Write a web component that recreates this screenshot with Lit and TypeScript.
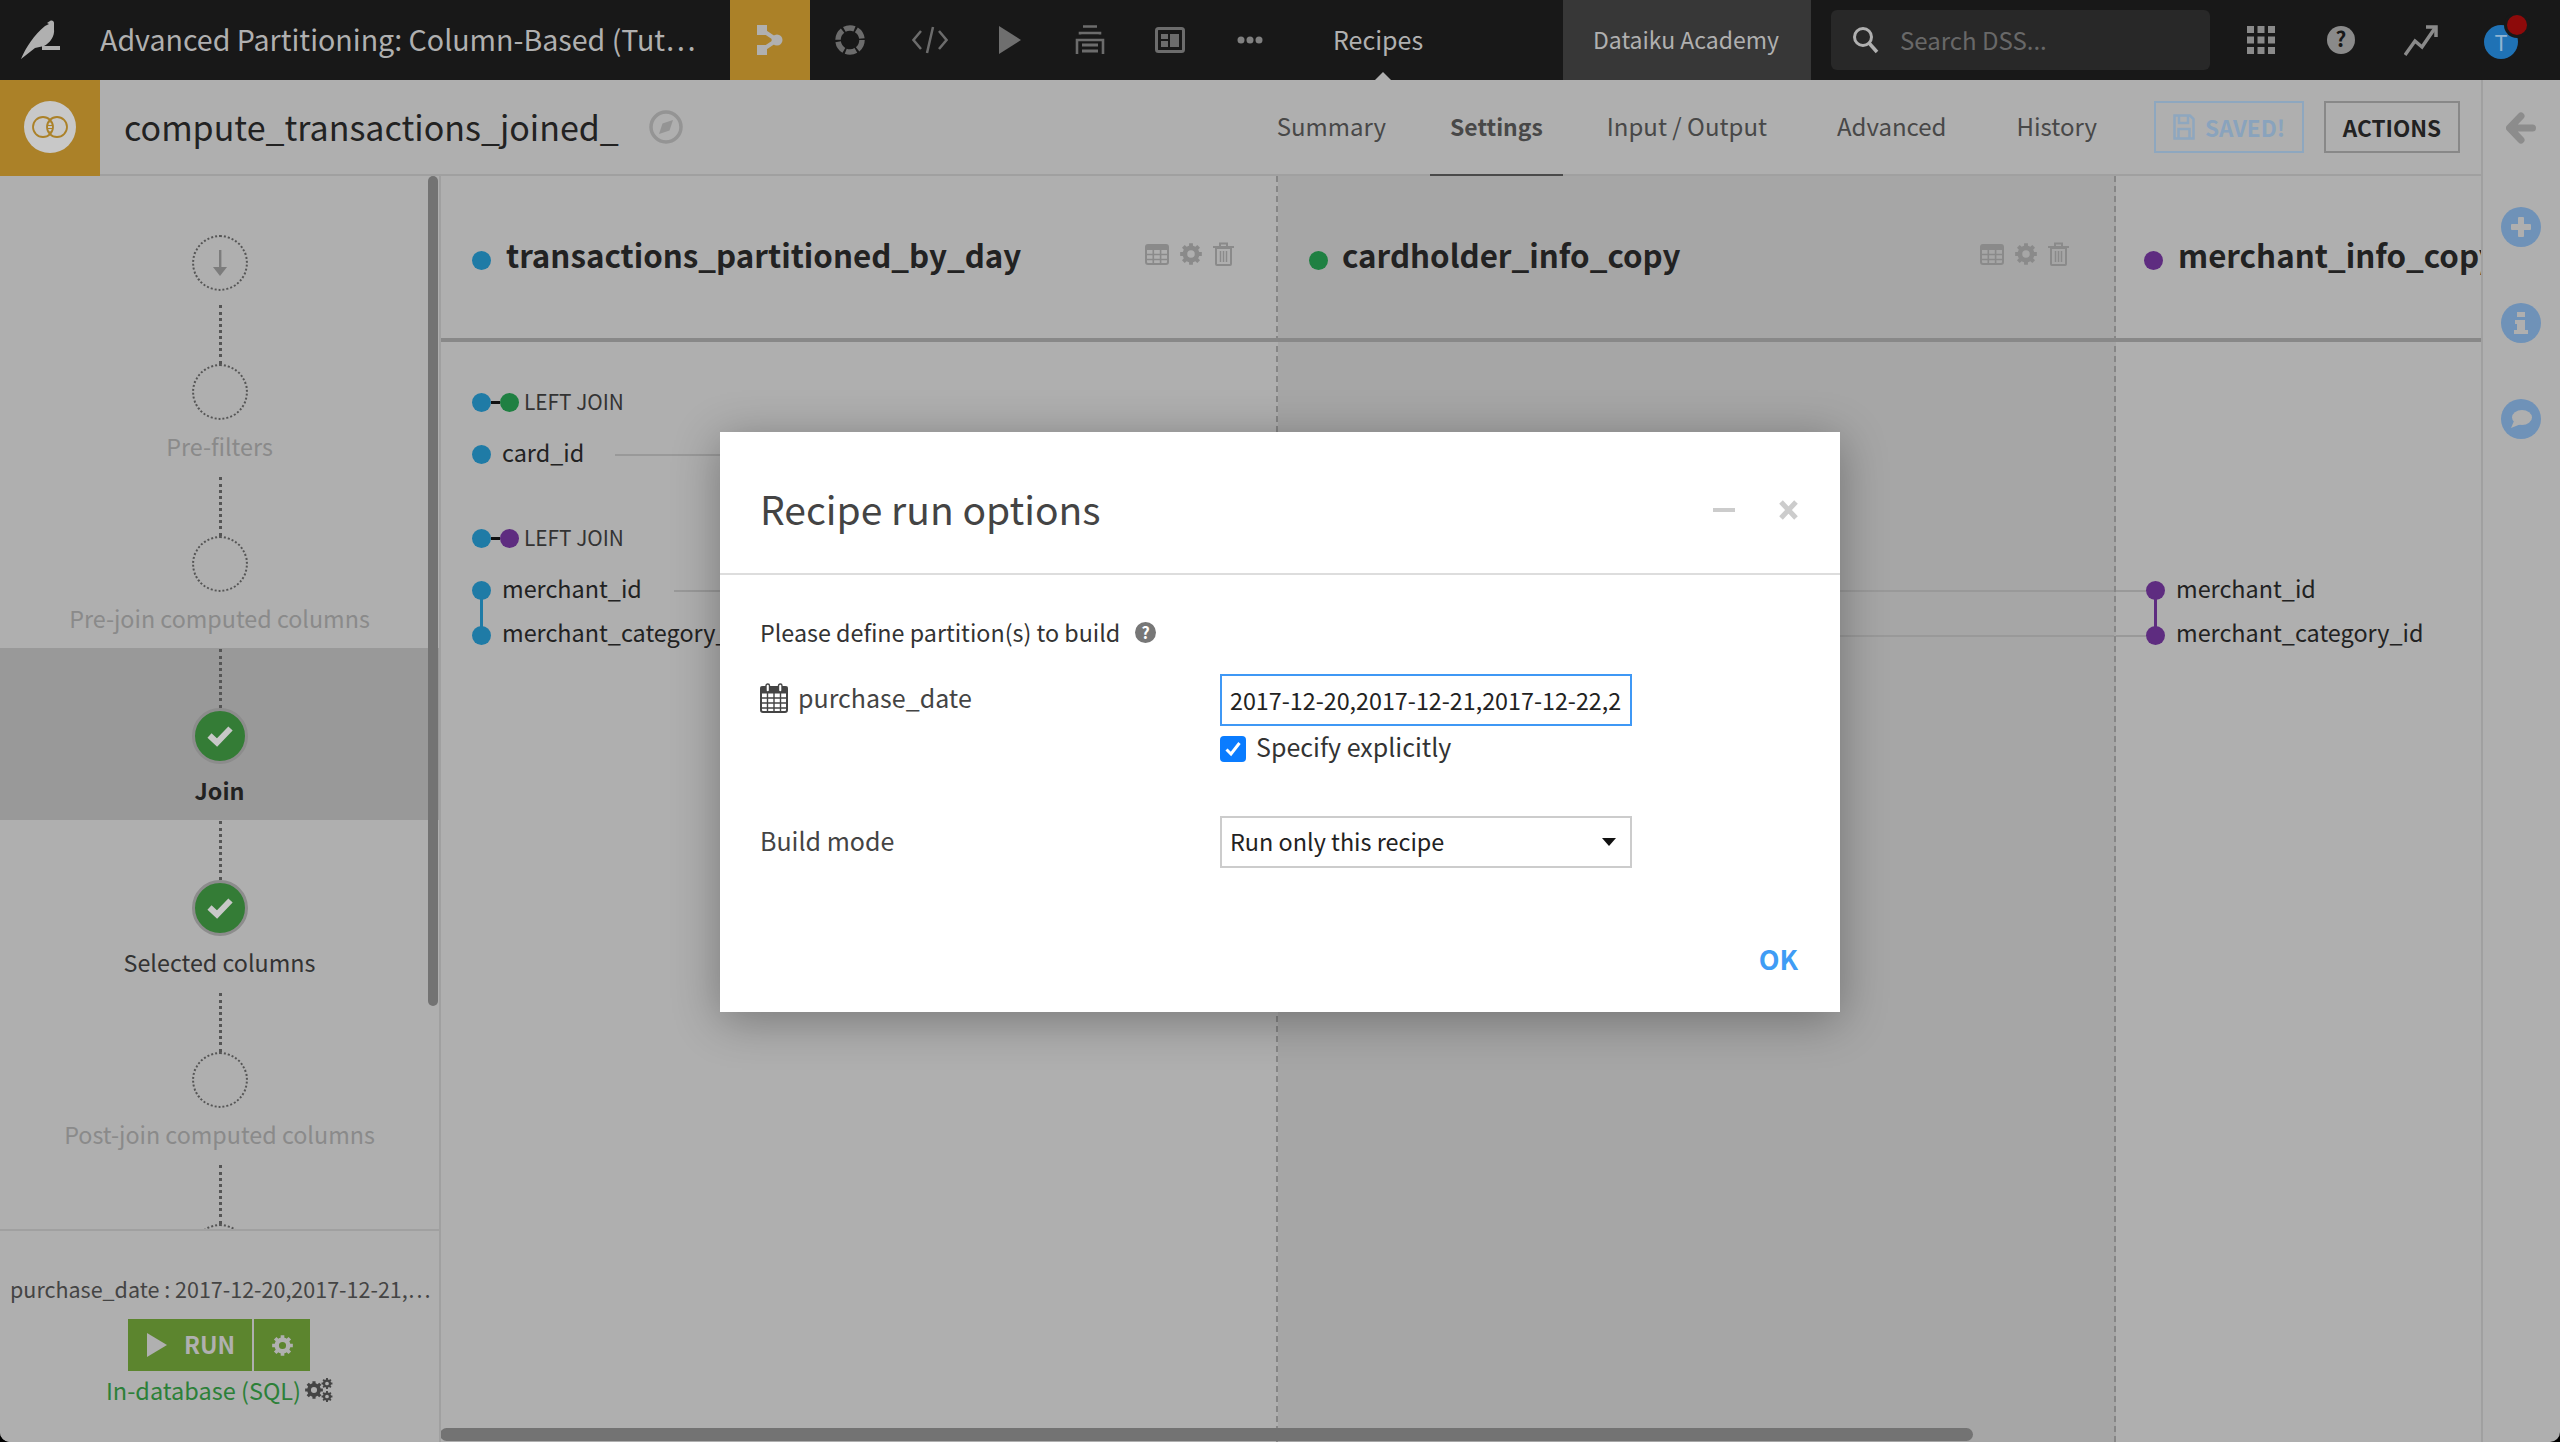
import { LitElement, html, css, svg } from "lit";
import { customElement } from "lit/decorators.js";

const gearPath = (cx: number, cy: number, r: number, teeth = 8) => {
  let d = "";
  const root = r * 0.76;
  const step = (Math.PI * 2) / teeth;
  for (let i = 0; i < teeth; i++) {
    const a = i * step - Math.PI / 2;
    const pts: [number, number][] = [
      [root, a - step * 0.5],
      [root, a - step * 0.3],
      [r, a - step * 0.22],
      [r, a + step * 0.22],
      [root, a + step * 0.3],
    ];
    for (const [rad, an] of pts) {
      d += `${d ? "L" : "M"}${(cx + rad * Math.cos(an)).toFixed(2)} ${(cy + rad * Math.sin(an)).toFixed(2)}`;
    }
  }
  const h = r * 0.34;
  d += `ZM${cx - h} ${cy}a${h} ${h} 0 1 0 ${h * 2} 0a${h} ${h} 0 1 0 ${-h * 2} 0Z`;
  return d;
};

const gearIcon = (size: number, color: string) => html`<svg width=${size} height=${size} viewBox="0 0 24 24" fill=${color}><path fill-rule="evenodd" d=${gearPath(12, 12, 12)}></path></svg>`;

const tableIcon = html`<svg class="ci t" viewBox="0 0 24 21"><rect x="1" y="1" width="22" height="19" rx="2" fill="none" stroke="#8a8a8a" stroke-width="2"></rect><rect x="1" y="1" width="22" height="5" fill="#8a8a8a"></rect><path d="M1 10.500H23M1 15.500H23M8.300 6V20M15.600 6V20" stroke="#8a8a8a" stroke-width="1.600"></path></svg>`;
const trashIcon = html`<svg class="ci b" viewBox="0 0 21 24"><path d="M3 6H18V22a1 1 0 0 1-1 1H4a1 1 0 0 1-1-1Z" fill="none" stroke="#8a8a8a" stroke-width="2"></path><path d="M0 5H21M7 5V1.500H14V5" fill="none" stroke="#8a8a8a" stroke-width="2"></path><path d="M7.500 9V20M10.500 9V20M13.500 9V20" stroke="#8a8a8a" stroke-width="1.500"></path></svg>`;

type Step = { label: string; state: "off" | "done"; active?: boolean; bold?: boolean };
const steps: Step[] = [
  { label: "Pre-filters", state: "off" },
  { label: "Pre-join computed columns", state: "off" },
  { label: "Join", state: "done", active: true, bold: true },
  { label: "Selected columns", state: "done" },
  { label: "Post-join computed columns", state: "off" },
  { label: "", state: "off" },
];

@customElement("app-root")
export class AppRoot extends LitElement {
  static styles = css`
    :host {
      display: block;
      width: 2560px;
      height: 1442px;
      position: relative;
      overflow: hidden;
      background: #000;
      font-family: "Noto Sans CJK SC", "Source Sans Pro", "Noto Sans", sans-serif;
      color: #333;
    }
    * { box-sizing: border-box; }
    .app { width: 2560px; height: 1442px; display: flex; flex-direction: column; background: #afafaf; border-radius: 0 0 10px 10px; overflow: hidden; }

    /* top bar */
    .top { height: 80px; flex: none; display: flex; align-items: stretch; background: #181818; color: #b0b0b0; }
    .logo { width: 100px; flex: none; display: flex; align-items: center; padding-left: 20px; }
    .pname { width: 630px; flex: none; font-size: 28.600px; line-height: 78px; white-space: nowrap; overflow: hidden; }
    .nav { width: 80px; flex: none; display: flex; align-items: center; justify-content: center; }
    .nav.on { background: #ab8128; }
    .recipes { width: 273px; flex: none; padding-left: 43px; font-size: 25px; line-height: 78px; position: relative; }
    .recipes::after { content: ""; position: absolute; left: 85px; bottom: 0; border: 8px solid transparent; border-top: 0; border-bottom-color: #afafaf; }
    .academy { width: 248px; flex: none; background: #373737; padding-left: 30px; font-size: 23px; line-height: 78px; white-space: nowrap; }
    .search { width: 379px; flex: none; margin: 10px 11px 10px 20px; background: #282828; border-radius: 6px; display: flex; align-items: center; gap: 21px; padding-left: 21px; font-size: 24px; color: #686868; }
    .search span { margin-top: -2px; }
    .avatar { width: 34px; height: 34px; border-radius: 50%; background: #1f72b5; position: relative; color: #8fb4d2; font-size: 22px; line-height: 32px; text-align: center; margin-top: 3px; }
    .avatar::after { content: ""; position: absolute; right: -9px; top: -10px; width: 20px; height: 20px; background: #8d0a0a; border-radius: 50%; box-shadow: 0 0 0 3px #181818; }
    .t-icon { width: 80px; flex: none; display: flex; align-items: center; justify-content: center; }

    /* layout */
    .below { flex: 1; min-height: 0; display: flex; }
    .center { flex: 1; min-width: 0; display: flex; flex-direction: column; }
    .rpanel { width: 79px; flex: none; border-left: 2px solid #a0a0a0; display: flex; flex-direction: column; align-items: center; padding-right: 2px; }
    .back { margin-top: 32px; height: 32px; }
    .rdot { width: 40px; height: 40px; border-radius: 50%; background: #6f92b8; display: flex; align-items: center; justify-content: center; }
    .rdot.first { margin-top: 63px; }
    .rdot + .rdot { margin-top: 56px; }

    /* sub bar */
    .sub { height: 96px; flex: none; display: flex; align-items: stretch; border-bottom: 2px solid #a0a0a0; }
    .badge { width: 100px; flex: none; background: #ab8128; display: flex; align-items: center; justify-content: center; padding-bottom: 2px; margin-bottom: -2px; }
    .badge span { width: 52px; height: 52px; border-radius: 50%; background: #c8c8c8; display: flex; align-items: center; justify-content: center; }
    .rname { margin-left: 24px; font-size: 34px; line-height: 94px; color: #222; white-space: nowrap; }
    .compass { margin-left: 30px; align-self: center; display: flex; }
    .tabs { margin-left: auto; display: flex; }
    .tab { padding: 0 20px; margin-left: 24px; font-size: 24px; line-height: 92px; color: #484848; position: relative; white-space: nowrap; }
    .tab:nth-child(n + 4) { margin-left: 30px; }
    .tab.on { font-weight: 700; font-size: 22.900px; }
    .tab.on::after { content: ""; position: absolute; left: 0; right: 0; bottom: -4px; height: 4px; background: #4a4a4a; }
    .actions { display: flex; gap: 20px; align-items: center; margin: 0 21px 0 37px; }
    .btn { height: 52px; display: flex; align-items: center; justify-content: center; gap: 10px; border: 2px solid; font-size: 22.500px; line-height: 46px; font-weight: 700; }
    .saved { width: 150px; border-color: #8ea7bf; color: #89a3bd; }
    .act { width: 136px; border-color: #888; color: #222; }

    /* workspace */
    .work { flex: 1; min-height: 0; display: flex; }
    .side { width: 441px; flex: none; border-right: 2px solid #a0a0a0; display: flex; flex-direction: column; position: relative; }
    .flow { flex: 1; min-height: 0; overflow: hidden; }
    .first-step { height: 128px; padding-top: 59px; display: flex; justify-content: center; }
    .step { height: 172px; display: flex; flex-direction: column; align-items: center; padding-top: 1px; }
    .step.on { background: #999; }
    .conn { height: 59px; width: 0; border-left: 3px dotted #555; flex: none; margin-left: 2px; }
    .node { width: 56px; height: 56px; flex: none; border-radius: 50%; border: 2px dotted #555; display: flex; align-items: center; justify-content: center; }
    .node.done { background: #347c36; border: 3px solid #8c8c8c; }
    .lbl { font-size: 23.300px; line-height: 32px; margin-top: 10px; color: #8a8a8a; white-space: nowrap; }
    .lbl.done { color: #333; }
    .lbl.bold { font-weight: 700; color: #222; }
    .thumb { position: absolute; left: 428px; top: 0; width: 10px; height: 830px; background: #737373; border-radius: 5px; }
    .foot { height: 213px; flex: none; border-top: 2px solid #a0a0a0; background: #afafaf; display: flex; flex-direction: column; align-items: center; padding-top: 42px; }
    .pline { width: 420px; font-size: 21.500px; line-height: 32px; color: #444; white-space: nowrap; margin-left: 1px; }
    .runrow { display: flex; gap: 2px; margin-top: 14px; margin-right: 1px; }
    .run { width: 124px; height: 52px; background: #5c852e; color: #b0b0b0; display: flex; align-items: center; padding-left: 19px; gap: 17px; font-size: 23.500px; font-weight: 700; }
    .run span { margin-top: -2px; }
    .rungear { width: 56px; height: 52px; background: #5c852e; display: flex; align-items: center; justify-content: center; }
    .engine { display: flex; align-items: center; gap: 4px; margin-top: 3px; color: #2c8038; font-size: 23.500px; line-height: 32px; }

    .main { flex: 1; min-width: 0; display: flex; overflow: hidden; position: relative; }
    .col { width: 837px; flex: none; border-right: 2px dashed #868686; display: flex; flex-direction: column; }
    .col.mid { background: #a6a6a6; width: 838px; }
    .col.last { flex: 1; min-width: 0; border-right: 0; overflow: hidden; }
    .chead { height: 166px; flex: none; border-bottom: 4px solid #888; margin-right: -2px; display: flex; align-items: flex-start; padding: 58px 0 0 31px; white-space: nowrap; }
    .col.last .chead { padding-left: 28px; }
    .chead .d { margin-top: 17px; flex: none; }
    .ctitle { font-size: 31.300px; font-weight: 700; line-height: 42px; color: #222; margin-left: 15px; }
    .mid .ctitle { margin-left: 14px; }
    .cicons { margin-left: auto; margin-right: 44px; display: flex; align-items: center; gap: 11px; height: 24px; margin-top: 8px; }
    .mid .cicons { margin-right: 47px; }
    .ci.t { width: 24px; height: 21px; }
    .ci.b { width: 21px; height: 24px; }
    .d { width: 19px; height: 19px; border-radius: 50%; display: block; }
    .blue { background: #1f7ba6; }
    .green { background: #1f8042; }
    .purple { background: #5e2c80; }
    .cbody { padding: 40px 0 0 31px; flex: 1; }
    .row { height: 40px; display: flex; align-items: center; font-size: 23.400px; color: #222; white-space: nowrap; position: relative; }
    .row .tx { margin: -5px 0 0 11px; }
    .row.g3 .tx { margin-top: -7px; }
    .jr { height: 40px; display: flex; align-items: center; font-size: 20.800px; color: #333; }
    .jr i { width: 9px; height: 3px; background: #111; display: block; }
    .jr .tx { margin: -2px 0 0 5px; }
    .g1 { margin-top: 12px; }
    .g2 { margin-top: 44px; }
    .g3 { margin-top: 5px; }
    .link { height: 2px; background: #999; margin-top: 2px; }
    .link.short { width: 200px; margin-left: 31px; flex: none; }
    .link.fill { flex: 1; margin-left: 32px; margin-right: -2px; }
    .link.to { width: 30px; flex: none; }
    .cbody.spaced { padding: 228px 0 0; }
    .cbody.spaced .row.full .link { flex: 1; }
    .d.tie { position: relative; }
    .tie::after { content: ""; position: absolute; left: 8px; top: 18px; width: 3px; height: 28px; background: inherit; }
    .hscroll { position: absolute; left: -1px; bottom: 1px; width: 1533px; height: 13px; background: #737373; border-radius: 7px; }

    /* dialog */
    .dialog { position: absolute; left: 720px; top: 432px; width: 1120px; height: 580px; background: #fff; box-shadow: 0 8px 44px rgba(0, 0, 0, 0.32); color: #444; }
    .dhead { height: 143px; border-bottom: 2px solid #ddd; display: flex; align-items: center; padding: 0 42px 0 40px; }
    .dtitle { font-size: 39px; line-height: 60px; color: #444; margin-top: 10px; }
    .dctl { margin-left: auto; display: flex; align-items: center; gap: 44px; margin-top: 14px; }
    .minus { width: 22px; height: 4px; background: #ccc; display: block; }
    .dbody { padding: 41px 0 0 40px; }
    .hint { display: flex; align-items: center; gap: 15px; font-size: 23.300px; line-height: 32px; color: #333; }
    .field { display: grid; grid-template-columns: 460px 412px; margin-top: 26px; }
    .flabel { display: flex; align-items: center; gap: 10px; font-size: 25px; color: #444; height: 46px; }
    .flabel svg { margin-top: 2px; }
    .input { display: block; width: 412px; height: 52px; border: 2px solid #3f98f5; padding: 0 8px; font: 23.300px/46px "Noto Sans CJK SC", sans-serif; color: #222; outline: none; background: #fff; }
    .check { display: flex; align-items: center; gap: 10px; margin-top: 10px; font-size: 25px; line-height: 26px; color: #333; }
    .check span:last-child { margin-top: -7px; }
    .box { width: 26px; height: 26px; border-radius: 4px; background: #0a7cff; display: flex; align-items: center; justify-content: center; }
    .field.b { margin-top: 54px; }
    .field.b .flabel { height: 47px; }
    .select { width: 412px; height: 52px; border: 2px solid #ccc; display: flex; align-items: center; justify-content: space-between; padding: 0 14px 0 8px; font-size: 23.400px; color: #222; }
    .select span:first-child { margin-top: -3px; }
    .caret { border: 7px solid transparent; border-top: 8px solid #111; border-bottom: 0; }
    .ok { position: absolute; right: 42px; bottom: 35px; font-size: 27px; line-height: 36px; font-weight: 700; color: #3f9cf5; }
  `;

  private renderTop() {
    return html`<div class="top">
      <div class="logo">
        <svg width="40" height="40" viewBox="0 0 40 40" fill="#b0b0b0"><path d="M30 1C32 0 34 1 34 3V9C35 16 30 23 24 26L15 28L1 39C6 27 14 15 25 6L29 4L27 3Z"></path><rect x="22" y="26" width="18" height="4"></rect></svg>
      </div>
      <div class="pname">Advanced Partitioning: Column-Based (Tut…</div>
      <div class="nav on"><svg width="26" height="30" viewBox="0 0 26 30" fill="#b0b0b0"><rect width="10" height="10"></rect><rect y="20" width="10" height="10"></rect><circle cx="20" cy="15" r="5.500"></circle><path d="M5 5L20 15L5 25" fill="none" stroke="#b0b0b0" stroke-width="4"></path></svg></div>
      <div class="nav"><svg width="30" height="30" viewBox="0 0 30 30" fill="none" stroke="#6c6c6c" stroke-width="5.500"><circle cx="15" cy="15" r="12" stroke-dasharray="10.500 2.070"></circle></svg></div>
      <div class="nav"><svg width="36" height="28" viewBox="0 0 36 28" fill="none" stroke="#6c6c6c" stroke-width="2.500"><path d="M9 5L1.500 14L9 23M27 5L34.500 14L27 23M21 1L15 27"></path></svg></div>
      <div class="nav"><svg width="22" height="28" viewBox="0 0 22 28" fill="#6f6f6f"><path d="M0 0L22 14L0 28Z"></path></svg></div>
      <div class="nav"><svg width="30" height="30" viewBox="0 0 30 30" fill="none" stroke="#6c6c6c" stroke-width="2.600"><path d="M8 1.500H22M5 9.500V8H25V9.500"></path><path d="M2 29V15H28V29"></path><path d="M7 20H23M7 26H23" stroke-width="3"></path></svg></div>
      <div class="nav"><svg width="30" height="26" viewBox="0 0 30 26" fill="none"><rect x="1.500" y="1.500" width="27" height="23" rx="2" stroke="#6c6c6c" stroke-width="3"></rect><rect x="6" y="7" width="7" height="5" fill="#6c6c6c"></rect><rect x="6" y="14" width="7" height="6" fill="#6c6c6c"></rect><rect x="15" y="7" width="9" height="13" fill="#6c6c6c"></rect></svg></div>
      <div class="nav"><svg width="26" height="8" viewBox="0 0 26 8" fill="#808080"><circle cx="4" cy="4" r="3.500"></circle><circle cx="13" cy="4" r="3.500"></circle><circle cx="22" cy="4" r="3.500"></circle></svg></div>
      <div class="recipes">Recipes</div>
      <div class="academy">Dataiku Academy</div>
      <div class="search">
        <svg width="27" height="28" viewBox="0 0 27 28" fill="none" stroke="#b0b0b0"><circle cx="11" cy="11" r="8.500" stroke-width="3"></circle><path d="M17 17L25 26" stroke-width="3.500"></path></svg>
        <span>Search DSS...</span>
      </div>
      <div class="t-icon"><svg width="28" height="28" viewBox="0 0 28 28" fill="#8a8a8a">${[0, 10.5, 21].flatMap((y) => [0, 10.5, 21].map((x) => svg`<rect x=${x} y=${y} width="7" height="7"></rect>`))}</svg></div>
      <div class="t-icon"><svg width="28" height="28" viewBox="0 0 28 28"><circle cx="14" cy="14" r="14" fill="#8a8a8a"></circle><text x="14" y="21" text-anchor="middle" font-size="21" font-weight="700" font-family="Noto Sans CJK SC" fill="#181818">?</text></svg></div>
      <div class="t-icon"><svg width="34" height="36" viewBox="0 0 34 36" fill="none" stroke="#8a8a8a" stroke-width="3.500"><path d="M1 33L11 19L18 25L31 6"></path><path d="M22 5H32V15"></path></svg></div>
      <div class="t-icon"><div class="avatar">T</div></div>
    </div>`;
  }

  private renderSub() {
    return html`<div class="sub">
      <div class="badge"><span><svg width="36" height="22" viewBox="0 0 36 22" fill="none" stroke="#ab8128" stroke-width="1.800"><circle cx="11" cy="11" r="10"></circle><circle cx="25" cy="11" r="10"></circle><path d="M16 6H20M15 9.500H21M15 12.500H21M16 16H20" stroke-width="1"></path></svg></span></div>
      <div class="rname">compute_transactions_joined_</div>
      <div class="compass"><svg width="34" height="34" viewBox="0 0 34 34"><circle cx="17" cy="17" r="15" fill="none" stroke="#949494" stroke-width="3.500"></circle><path d="M24 10L20.500 20.500L10 24L13.500 13.500Z" fill="#949494"></path></svg></div>
      <div class="tabs">
        ${["Summary", "Settings", "Input / Output", "Advanced", "History"].map((t) => html`<div class="tab ${t === "Settings" ? "on" : ""}">${t}</div>`)}
      </div>
      <div class="actions">
        <div class="btn saved"><svg width="22" height="26" viewBox="0 0 22 26" fill="none" stroke="#8ea7bf" stroke-width="2.500"><path d="M1.500 1.500H17L20.500 5V24.500H1.500Z"></path><path d="M6 2V9H15V2M5.500 24V15H16.500V24"></path></svg>SAVED!</div>
        <div class="btn act">ACTIONS</div>
      </div>
    </div>`;
  }

  private renderSide() {
    return html`<div class="side">
      <div class="flow">
        <div class="first-step"><div class="node"><svg width="14" height="26" viewBox="0 0 14 26" fill="#7c7c7c"><rect x="6" width="2.400" height="20"></rect><path d="M0 17H14L7 26Z"></path></svg></div></div>
        ${steps.map(
          (s) => html`<div class="step ${s.active ? "on" : ""}">
            <div class="conn"></div>
            <div class="node ${s.state === "done" ? "done" : ""}">
              ${s.state === "done" ? html`<svg width="26" height="22" viewBox="0 0 26 22" fill="none" stroke="#c8c8c8" stroke-width="6"><path d="M2.500 10.500L10 17.500L23.500 3.500"></path></svg>` : ""}
            </div>
            <div class="lbl ${s.state === "done" ? "done" : ""} ${s.bold ? "bold" : ""}">${s.label}</div>
          </div>`,
        )}
      </div>
      <div class="thumb"></div>
      <div class="foot">
        <div class="pline">purchase_date : 2017-12-20,2017-12-21,…</div>
        <div class="runrow">
          <div class="run"><svg width="20" height="24" viewBox="0 0 20 24" fill="#b0b0b0"><path d="M0 0L20 12L0 24Z"></path></svg><span>RUN</span></div>
          <div class="rungear">${gearIcon(21, "#b0b0b0")}</div>
        </div>
        <div class="engine">In-database (SQL)
          <svg width="28" height="24" viewBox="0 0 28 24" fill="#444"><path fill-rule="evenodd" d=${gearPath(9, 12, 9)}></path><path fill-rule="evenodd" d=${gearPath(22, 5.5, 5.5)}></path><path fill-rule="evenodd" d=${gearPath(22, 18.5, 5.5)}></path></svg>
        </div>
      </div>
    </div>`;
  }

  private renderMain() {
    return html`<div class="main">
      <div class="col">
        <div class="chead"><span class="d blue"></span><span class="ctitle">transactions_partitioned_by_day</span>
          <div class="cicons">${tableIcon}${gearIcon(22, "#8a8a8a")}${trashIcon}</div></div>
        <div class="cbody">
          <div class="jr"><span class="d blue"></span><i></i><span class="d green"></span><span class="tx">LEFT JOIN</span></div>
          <div class="row g1"><span class="d blue"></span><span class="tx">card_id</span><span class="link short"></span></div>
          <div class="jr g2"><span class="d blue"></span><i></i><span class="d purple"></span><span class="tx">LEFT JOIN</span></div>
          <div class="row g1"><span class="d blue tie"></span><span class="tx">merchant_id</span><span class="link fill"></span></div>
          <div class="row g3"><span class="d blue"></span><span class="tx">merchant_category_id</span><span class="link fill"></span></div>
        </div>
      </div>
      <div class="col mid">
        <div class="chead"><span class="d green"></span><span class="ctitle">cardholder_info_copy</span>
          <div class="cicons">${tableIcon}${gearIcon(22, "#8a8a8a")}${trashIcon}</div></div>
        <div class="cbody spaced">
          <div class="row full"><span class="link"></span></div>
          <div class="row full g3"><span class="link"></span></div>
        </div>
      </div>
      <div class="col last">
        <div class="chead"><span class="d purple"></span><span class="ctitle">merchant_info_copy</span></div>
        <div class="cbody spaced">
          <div class="row"><span class="link to"></span><span class="d purple tie"></span><span class="tx">merchant_id</span></div>
          <div class="row g3"><span class="link to"></span><span class="d purple"></span><span class="tx">merchant_category_id</span></div>
        </div>
      </div>
      <div class="hscroll"></div>
    </div>`;
  }

  private renderDialog() {
    return html`<div class="dialog">
      <div class="dhead">
        <div class="dtitle">Recipe run options</div>
        <div class="dctl"><span class="minus"></span>
          <svg width="19" height="20" viewBox="0 0 19 20" stroke="#ccc" stroke-width="5"><path d="M2 2L17 18M17 2L2 18"></path></svg></div>
      </div>
      <div class="dbody">
        <div class="hint">Please define partition(s) to build
          <svg width="21" height="21" viewBox="0 0 21 21"><circle cx="10.500" cy="10.500" r="10.500" fill="#777"></circle><text x="10.500" y="16.500" text-anchor="middle" font-size="16" font-weight="700" font-family="Noto Sans CJK SC" fill="#fff">?</text></svg>
        </div>
        <div class="field">
          <div class="flabel">
            <svg width="28" height="30" viewBox="0 0 28 30" fill="none" stroke="#444"><rect x="1" y="4" width="26" height="25" rx="2" stroke-width="2"></rect><rect x="1" y="4" width="26" height="6" fill="#444" stroke-width="1"></rect><path d="M1 15H27M1 20H27M1 25H27M7.500 10V29M14 10V29M20.500 10V29" stroke-width="1.400"></path><rect x="6" y="1" width="3.500" height="8" rx="1.700" fill="#fff" stroke-width="1.400"></rect><rect x="18.500" y="1" width="3.500" height="8" rx="1.700" fill="#fff" stroke-width="1.400"></rect></svg>
            purchase_date
          </div>
          <div>
            <input class="input" readonly .value=${"2017-12-20,2017-12-21,2017-12-22,2017-12-23"} />
            <div class="check"><span class="box"><svg width="18" height="18" viewBox="0 0 18 18" fill="none" stroke="#fff" stroke-width="3"><path d="M2.500 9.500L7 14L15.500 3"></path></svg></span><span>Specify explicitly</span></div>
          </div>
        </div>
        <div class="field b">
          <div class="flabel">Build mode</div>
          <div class="select"><span>Run only this recipe</span><span class="caret"></span></div>
        </div>
      </div>
      <div class="ok">OK</div>
    </div>`;
  }

  render() {
    return html`<div class="app">
        ${this.renderTop()}
        <div class="below">
          <div class="center">
            ${this.renderSub()}
            <div class="work">${this.renderSide()}${this.renderMain()}</div>
          </div>
          <div class="rpanel">
            <div class="back"><svg width="30" height="32" viewBox="0 0 30 32" fill="none" stroke="#8c8c8c" stroke-width="7" stroke-linecap="round" stroke-linejoin="round"><path d="M15 4L3.500 16L15 28M5 16H26.500"></path></svg></div>
            <div class="rdot first"><svg width="20" height="20" viewBox="0 0 20 20" fill="#afafaf"><rect x="7" width="6" height="20" rx="1"></rect><rect y="7" width="20" height="6" rx="1"></rect></svg></div>
            <div class="rdot"><svg width="14" height="22" viewBox="0 0 14 22" fill="#afafaf"><rect x="3" width="8" height="5"></rect><path d="M1 8H11V18H14V22H0V18H3V12H1Z"></path></svg></div>
            <div class="rdot"><svg width="22" height="20" viewBox="0 0 22 20" fill="#afafaf"><ellipse cx="12" cy="8.500" rx="10" ry="7.500"></ellipse><path d="M4 12L1 19L11 15Z"></path></svg></div>
          </div>
        </div>
      </div>
      ${this.renderDialog()}`;
  }
}
